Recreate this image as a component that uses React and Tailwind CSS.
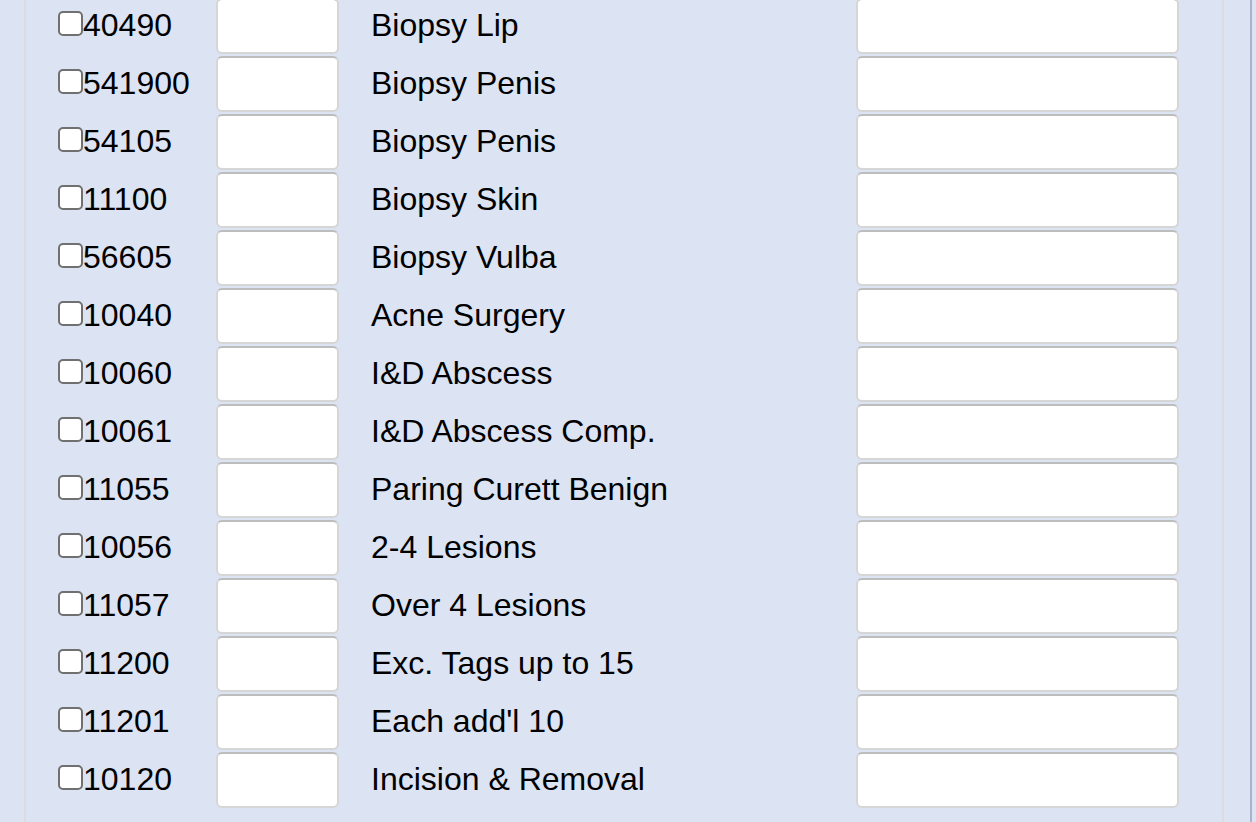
import React from 'react';

const rows = [
  ['40490', 'Biopsy Lip'],
  ['541900', 'Biopsy Penis'],
  ['54105', 'Biopsy Penis'],
  ['11100', 'Biopsy Skin'],
  ['56605', 'Biopsy Vulba'],
  ['10040', 'Acne Surgery'],
  ['10060', 'I&D Abscess'],
  ['10061', 'I&D Abscess Comp.'],
  ['11055', 'Paring Curett Benign'],
  ['10056', '2-4 Lesions'],
  ['11057', 'Over 4 Lesions'],
  ['11200', 'Exc. Tags up to 15'],
  ['11201', "Each add'l 10"],
  ['10120', 'Incision & Removal'],
];

function Box({ className }) {
  return (
    <div className={`h-[56px] rounded-[6px] bg-white border-2 border-[#d6d6d6] border-t-[#bdbdbd] ${className}`} />
  );
}

export default function App() {
  return (
    <div
      className="w-[1256px] h-[822px] overflow-hidden bg-[#dce3f2] flex text-black"
      style={{ fontFamily: '"Liberation Sans", Arial, sans-serif' }}
    >
      <div className="w-[24px] shrink-0" />
      {/* procedure table panel */}
      <div className="w-[1200px] shrink-0 border-x-2 border-[#dcdcdc]">
        <div className="mt-[-2px] flex flex-col gap-[2px] pl-[32px]">
          {rows.map(([code, label], i) => (
            <div key={i} className="flex items-center h-[56px]">
              <div className="w-[158px] flex items-center mt-[-2px]">
                <span className="w-[25px] h-[25px] rounded-[5px] border-2 border-[#707070] bg-white mt-[-3px] shrink-0" />
                <span className="text-[32px] leading-none">{code}</span>
              </div>
              <Box className="w-[123px]" />
              <div className="w-[517px] pl-[32px] text-[32px] leading-none mt-[-2px]">{label}</div>
              <Box className="w-[323px]" />
            </div>
          ))}
        </div>
      </div>
      <div className="w-[26px] shrink-0" />
      <div className="w-[2px] shrink-0 bg-[#a7b3cf]" />
    </div>
  );
}
